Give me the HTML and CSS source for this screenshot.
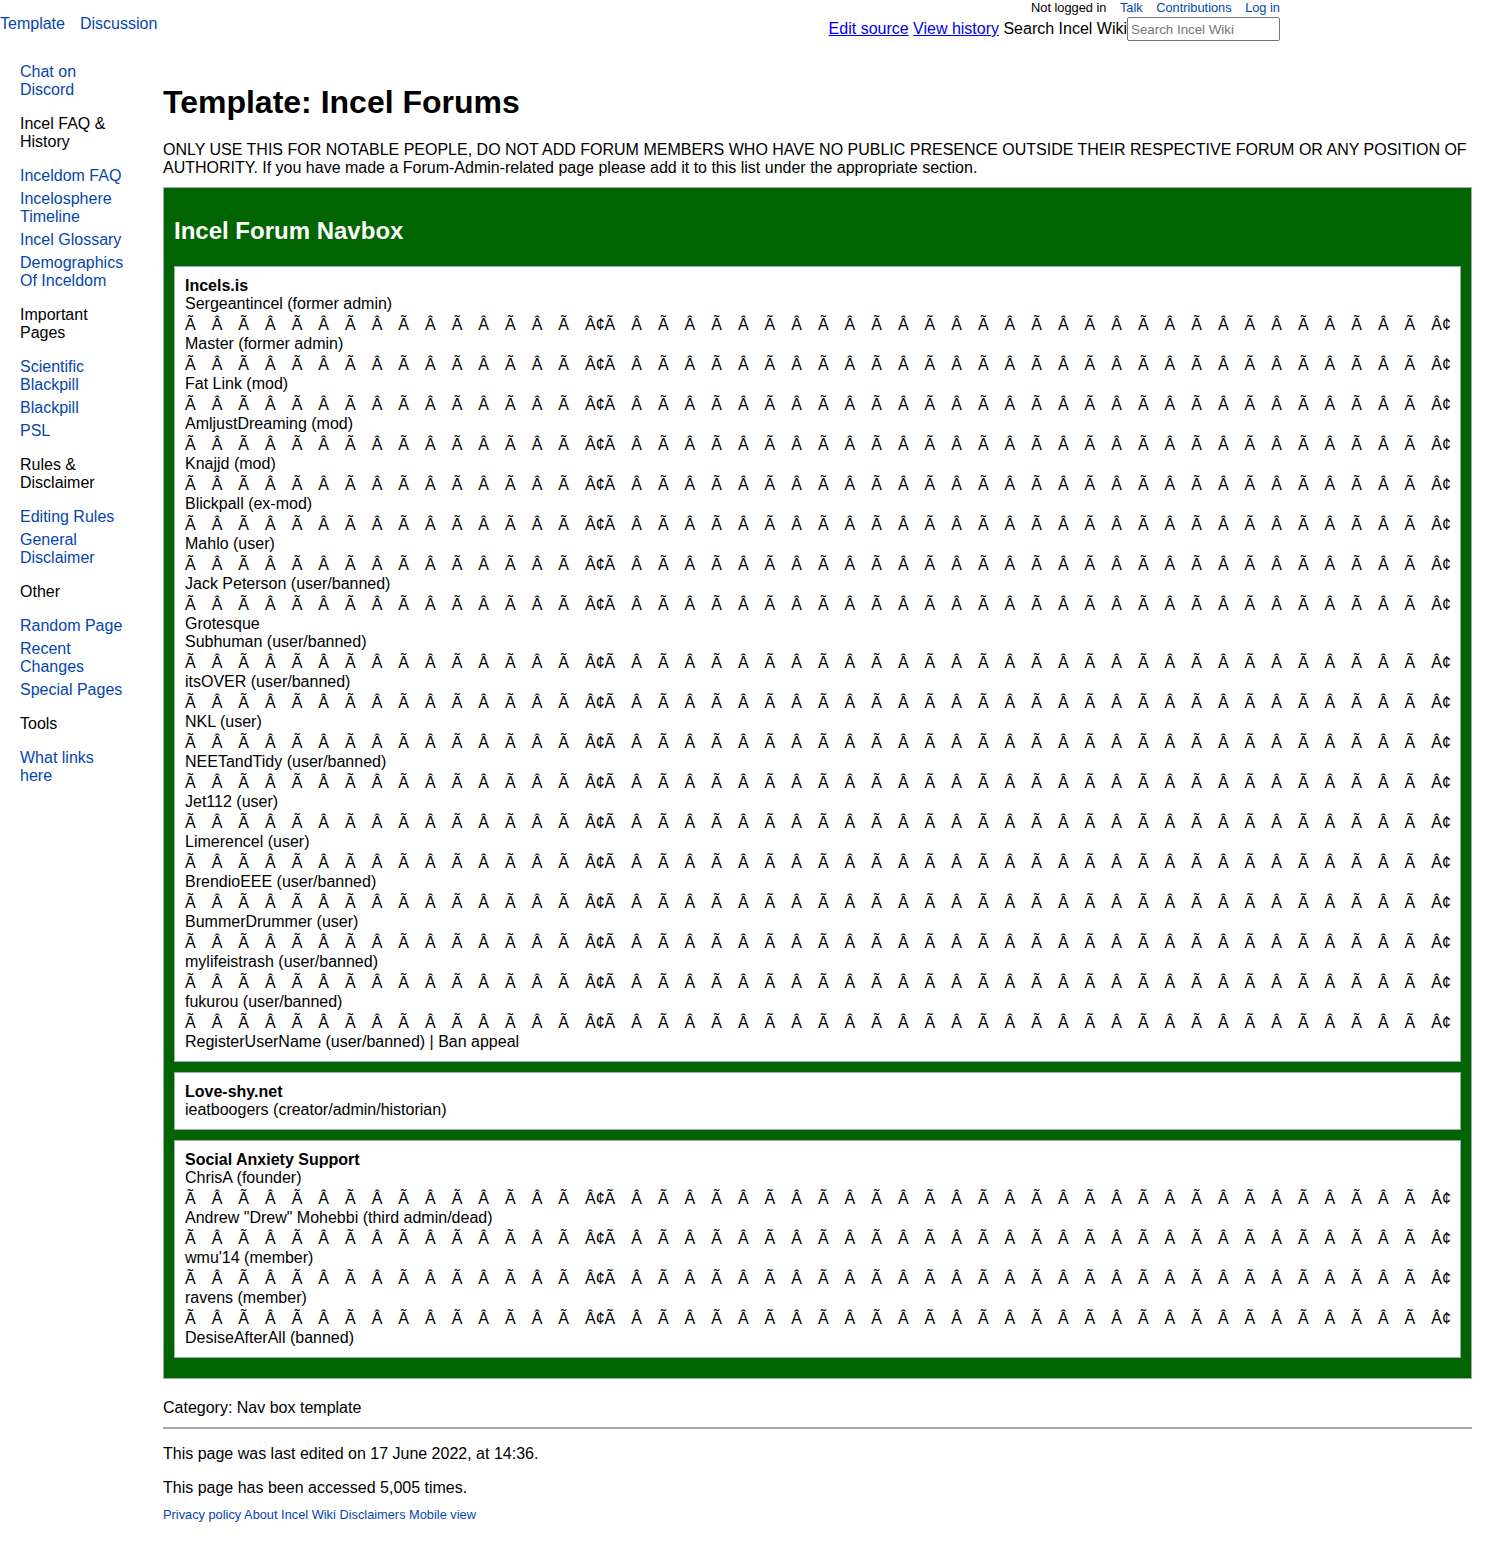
FILE: index.html
```html
<!DOCTYPE html>
<html lang="en">
<head>
<meta charset="utf-8">
<title>Template: Incel Forums - Incel Wiki</title>
<link rel="stylesheet" href="styles.css">
</head>
<body>
<header class="topbar">
  <div class="ns-tabs">
    <a href="#">Template</a>
    <a href="#">Discussion</a>
  </div>
  <div class="user-area">
    <div class="personal">
      <span class="not-logged">Not logged in</span>
      <a href="#">Talk</a>
      <a href="#">Contributions</a>
      <a href="#">Log in</a>
    </div>
    <div class="actions">
      <a href="#" class="action-link">Edit source</a>
      <a href="#" class="action-link">View history</a>
      <label class="search-label" for="search">Search Incel Wiki</label><input id="search" class="search-input" type="search" placeholder="Search Incel Wiki">
    </div>
  </div>
</header>

<div class="layout">
  <nav class="sidebar">
    <div class="side-section">
      <ul class="side-links">
        <li><a href="#">Chat on Discord</a></li>
      </ul>
    </div>
    <div class="side-section">
      <h3 class="side-heading">Incel FAQ &amp; History</h3>
      <ul class="side-links">
        <li><a href="#">Inceldom FAQ</a></li>
        <li><a href="#">Incelosphere Timeline</a></li>
        <li><a href="#">Incel Glossary</a></li>
        <li><a href="#">Demographics Of Inceldom</a></li>
      </ul>
    </div>
    <div class="side-section">
      <h3 class="side-heading">Important Pages</h3>
      <ul class="side-links">
        <li><a href="#">Scientific Blackpill</a></li>
        <li><a href="#">Blackpill</a></li>
        <li><a href="#">PSL</a></li>
      </ul>
    </div>
    <div class="side-section">
      <h3 class="side-heading">Rules &amp; Disclaimer</h3>
      <ul class="side-links">
        <li><a href="#">Editing Rules</a></li>
        <li><a href="#">General Disclaimer</a></li>
      </ul>
    </div>
    <div class="side-section">
      <h3 class="side-heading">Other</h3>
      <ul class="side-links">
        <li><a href="#">Random Page</a></li>
        <li><a href="#">Recent Changes</a></li>
        <li><a href="#">Special Pages</a></li>
      </ul>
    </div>
    <div class="side-section">
      <h3 class="side-heading">Tools</h3>
      <ul class="side-links">
        <li><a href="#">What links here</a></li>
      </ul>
    </div>
  </nav>

  <main class="content">
    <h1 class="page-title">Template: Incel Forums</h1>
    <p class="desc">ONLY USE THIS FOR NOTABLE PEOPLE, DO NOT ADD FORUM MEMBERS WHO HAVE NO PUBLIC PRESENCE OUTSIDE THEIR RESPECTIVE FORUM OR ANY POSITION OF AUTHORITY. If you have made a Forum-Admin-related page please add it to this list under the appropriate section.</p>

    <div class="navbox">
      <div class="navbox-head">Incel Forum Navbox</div>
      <div class="navbox-body">
        <div class="group">
          <div class="group-title">Incels.is</div>
          <div class="name">Sergeantincel (former admin)</div>
          <div class="sep">Ã Â Ã Â Ã Â Ã Â Ã Â Ã Â Ã Â Ã Â¢Ã Â Ã Â Ã Â Ã Â Ã Â Ã Â Ã Â Ã Â Ã Â Ã Â Ã Â Ã Â Ã Â Ã Â Ã Â Ã Â¢</div>
          <div class="name">Master (former admin)</div>
          <div class="sep">Ã Â Ã Â Ã Â Ã Â Ã Â Ã Â Ã Â Ã Â¢Ã Â Ã Â Ã Â Ã Â Ã Â Ã Â Ã Â Ã Â Ã Â Ã Â Ã Â Ã Â Ã Â Ã Â Ã Â Ã Â¢</div>
          <div class="name">Fat Link (mod)</div>
          <div class="sep">Ã Â Ã Â Ã Â Ã Â Ã Â Ã Â Ã Â Ã Â¢Ã Â Ã Â Ã Â Ã Â Ã Â Ã Â Ã Â Ã Â Ã Â Ã Â Ã Â Ã Â Ã Â Ã Â Ã Â Ã Â¢</div>
          <div class="name">AmljustDreaming (mod)</div>
          <div class="sep">Ã Â Ã Â Ã Â Ã Â Ã Â Ã Â Ã Â Ã Â¢Ã Â Ã Â Ã Â Ã Â Ã Â Ã Â Ã Â Ã Â Ã Â Ã Â Ã Â Ã Â Ã Â Ã Â Ã Â Ã Â¢</div>
          <div class="name">Knajjd (mod)</div>
          <div class="sep">Ã Â Ã Â Ã Â Ã Â Ã Â Ã Â Ã Â Ã Â¢Ã Â Ã Â Ã Â Ã Â Ã Â Ã Â Ã Â Ã Â Ã Â Ã Â Ã Â Ã Â Ã Â Ã Â Ã Â Ã Â¢</div>
          <div class="name">Blickpall (ex-mod)</div>
          <div class="sep">Ã Â Ã Â Ã Â Ã Â Ã Â Ã Â Ã Â Ã Â¢Ã Â Ã Â Ã Â Ã Â Ã Â Ã Â Ã Â Ã Â Ã Â Ã Â Ã Â Ã Â Ã Â Ã Â Ã Â Ã Â¢</div>
          <div class="name">Mahlo (user)</div>
          <div class="sep">Ã Â Ã Â Ã Â Ã Â Ã Â Ã Â Ã Â Ã Â¢Ã Â Ã Â Ã Â Ã Â Ã Â Ã Â Ã Â Ã Â Ã Â Ã Â Ã Â Ã Â Ã Â Ã Â Ã Â Ã Â¢</div>
          <div class="name">Jack Peterson (user/banned)</div>
          <div class="sep">Ã Â Ã Â Ã Â Ã Â Ã Â Ã Â Ã Â Ã Â¢Ã Â Ã Â Ã Â Ã Â Ã Â Ã Â Ã Â Ã Â Ã Â Ã Â Ã Â Ã Â Ã Â Ã Â Ã Â Ã Â¢</div>
          <div class="name">Grotesque</div>
          <div class="name">Subhuman (user/banned)</div>
          <div class="sep">Ã Â Ã Â Ã Â Ã Â Ã Â Ã Â Ã Â Ã Â¢Ã Â Ã Â Ã Â Ã Â Ã Â Ã Â Ã Â Ã Â Ã Â Ã Â Ã Â Ã Â Ã Â Ã Â Ã Â Ã Â¢</div>
          <div class="name">itsOVER (user/banned)</div>
          <div class="sep">Ã Â Ã Â Ã Â Ã Â Ã Â Ã Â Ã Â Ã Â¢Ã Â Ã Â Ã Â Ã Â Ã Â Ã Â Ã Â Ã Â Ã Â Ã Â Ã Â Ã Â Ã Â Ã Â Ã Â Ã Â¢</div>
          <div class="name">NKL (user)</div>
          <div class="sep">Ã Â Ã Â Ã Â Ã Â Ã Â Ã Â Ã Â Ã Â¢Ã Â Ã Â Ã Â Ã Â Ã Â Ã Â Ã Â Ã Â Ã Â Ã Â Ã Â Ã Â Ã Â Ã Â Ã Â Ã Â¢</div>
          <div class="name">NEETandTidy (user/banned)</div>
          <div class="sep">Ã Â Ã Â Ã Â Ã Â Ã Â Ã Â Ã Â Ã Â¢Ã Â Ã Â Ã Â Ã Â Ã Â Ã Â Ã Â Ã Â Ã Â Ã Â Ã Â Ã Â Ã Â Ã Â Ã Â Ã Â¢</div>
          <div class="name">Jet112 (user)</div>
          <div class="sep">Ã Â Ã Â Ã Â Ã Â Ã Â Ã Â Ã Â Ã Â¢Ã Â Ã Â Ã Â Ã Â Ã Â Ã Â Ã Â Ã Â Ã Â Ã Â Ã Â Ã Â Ã Â Ã Â Ã Â Ã Â¢</div>
          <div class="name">Limerencel (user)</div>
          <div class="sep">Ã Â Ã Â Ã Â Ã Â Ã Â Ã Â Ã Â Ã Â¢Ã Â Ã Â Ã Â Ã Â Ã Â Ã Â Ã Â Ã Â Ã Â Ã Â Ã Â Ã Â Ã Â Ã Â Ã Â Ã Â¢</div>
          <div class="name">BrendioEEE (user/banned)</div>
          <div class="sep">Ã Â Ã Â Ã Â Ã Â Ã Â Ã Â Ã Â Ã Â¢Ã Â Ã Â Ã Â Ã Â Ã Â Ã Â Ã Â Ã Â Ã Â Ã Â Ã Â Ã Â Ã Â Ã Â Ã Â Ã Â¢</div>
          <div class="name">BummerDrummer (user)</div>
          <div class="sep">Ã Â Ã Â Ã Â Ã Â Ã Â Ã Â Ã Â Ã Â¢Ã Â Ã Â Ã Â Ã Â Ã Â Ã Â Ã Â Ã Â Ã Â Ã Â Ã Â Ã Â Ã Â Ã Â Ã Â Ã Â¢</div>
          <div class="name">mylifeistrash (user/banned)</div>
          <div class="sep">Ã Â Ã Â Ã Â Ã Â Ã Â Ã Â Ã Â Ã Â¢Ã Â Ã Â Ã Â Ã Â Ã Â Ã Â Ã Â Ã Â Ã Â Ã Â Ã Â Ã Â Ã Â Ã Â Ã Â Ã Â¢</div>
          <div class="name">fukurou (user/banned)</div>
          <div class="sep">Ã Â Ã Â Ã Â Ã Â Ã Â Ã Â Ã Â Ã Â¢Ã Â Ã Â Ã Â Ã Â Ã Â Ã Â Ã Â Ã Â Ã Â Ã Â Ã Â Ã Â Ã Â Ã Â Ã Â Ã Â¢</div>
          <div class="name">RegisterUserName (user/banned) | Ban appeal</div>
        </div>

        <div class="group">
          <div class="group-title">Love-shy.net</div>
          <div class="name">ieatboogers (creator/admin/historian)</div>
        </div>

        <div class="group">
          <div class="group-title">Social Anxiety Support</div>
          <div class="name">ChrisA (founder)</div>
          <div class="sep">Ã Â Ã Â Ã Â Ã Â Ã Â Ã Â Ã Â Ã Â¢Ã Â Ã Â Ã Â Ã Â Ã Â Ã Â Ã Â Ã Â Ã Â Ã Â Ã Â Ã Â Ã Â Ã Â Ã Â Ã Â¢</div>
          <div class="name">Andrew "Drew" Mohebbi (third admin/dead)</div>
          <div class="sep">Ã Â Ã Â Ã Â Ã Â Ã Â Ã Â Ã Â Ã Â¢Ã Â Ã Â Ã Â Ã Â Ã Â Ã Â Ã Â Ã Â Ã Â Ã Â Ã Â Ã Â Ã Â Ã Â Ã Â Ã Â¢</div>
          <div class="name">wmu'14 (member)</div>
          <div class="sep">Ã Â Ã Â Ã Â Ã Â Ã Â Ã Â Ã Â Ã Â¢Ã Â Ã Â Ã Â Ã Â Ã Â Ã Â Ã Â Ã Â Ã Â Ã Â Ã Â Ã Â Ã Â Ã Â Ã Â Ã Â¢</div>
          <div class="name">ravens (member)</div>
          <div class="sep">Ã Â Ã Â Ã Â Ã Â Ã Â Ã Â Ã Â Ã Â¢Ã Â Ã Â Ã Â Ã Â Ã Â Ã Â Ã Â Ã Â Ã Â Ã Â Ã Â Ã Â Ã Â Ã Â Ã Â Ã Â¢</div>
          <div class="name">DesiseAfterAll (banned)</div>
        </div>
      </div>
    </div>

    <div class="catlinks">Category: Nav box template</div>
    <hr class="rule">
    <p class="info">This page was last edited on 17 June 2022, at 14:36.</p>
    <p class="info info-last">This page has been accessed 5,005 times.</p>
    <div class="footer-links">
      <a href="#">Privacy policy</a> <a href="#">About Incel Wiki</a> <a href="#">Disclaimers</a> <a href="#">Mobile view</a>
    </div>
  </main>
</div>
</body>
</html>
```

FILE: styles.css
```css
* {
  box-sizing: border-box;
}

body {
  margin: 0;
  font-family: "Liberation Sans", Arial, sans-serif;
  font-size: 16px;
  line-height: 18px;
  color: #000;
  background: #fff;
}

a {
  color: #0645ad;
  text-decoration: none;
}

/* ---------- top bar ---------- */
.topbar {
  display: flex;
  justify-content: space-between;
  align-items: flex-start;
  padding-right: 213px;
}

.ns-tabs {
  display: flex;
  gap: 15px;
  padding-top: 15px;
}

.user-area {
  display: flex;
  flex-direction: column;
  align-items: flex-end;
}

.personal {
  display: flex;
  gap: 13.5px;
  font-size: 12.8px;
  line-height: 15px;
}

.actions {
  display: flex;
  align-items: center;
  margin-top: 2px;
}

.action-link {
  color: #0000ee;
  text-decoration: underline;
  margin-right: 4.4px;
}

.search-input {
  width: 153px;
  height: 24px;
  border: 1px solid #767676;
  border-radius: 2px;
  padding: 1px 3px;
  font-family: "Liberation Sans", Arial, sans-serif;
  font-size: 13.33px;
  background: #fff;
}

.search-input::placeholder {
  color: #757575;
}

/* ---------- layout ---------- */
.layout {
  display: flex;
  padding: 22px 21px 0 20px;
}

.sidebar {
  width: 105px;
  flex-shrink: 0;
}

.side-section {
  margin-bottom: 16px;
}

.side-heading {
  margin: 0 0 16px;
  font-size: 16px;
  font-weight: normal;
  line-height: 18px;
}

.side-links {
  list-style: none;
  margin: 0;
  padding: 0;
}

.side-links li {
  margin-bottom: 5px;
}

.side-links li:last-child {
  margin-bottom: 0;
}

.content {
  flex: 1;
  min-width: 0;
  margin-left: 38px;
}

.page-title {
  margin: 21px 0 20px;
  font-size: 32px;
  line-height: 37px;
  font-weight: bold;
}

.desc {
  margin: 0 0 10px;
}

/* ---------- navbox ---------- */
.navbox {
  border: 1px solid #a2a9b1;
  background: #006400;
}

.navbox-head {
  padding: 29px 10px 21px;
  color: #fff;
  font-size: 24px;
  line-height: 28px;
  font-weight: bold;
}

.navbox-body {
  padding: 0 10px 10px;
}

.group {
  background: #fff;
  border: 1px solid #a2a9b1;
  padding: 10px 10px 10px;
  margin-bottom: 10px;
}

.group-title {
  font-weight: bold;
}

.sep {
  white-space: nowrap;
  line-height: 21px;
  padding-top: 1px;
  word-spacing: 11.55px;
}

/* ---------- footer ---------- */
.catlinks {
  margin-top: 20px;
}

.rule {
  border: 0;
  border-top: 2px solid #a8a8a8;
  margin: 10px 0 16px;
}

.info {
  margin: 0 0 16px;
}

.info-last {
  margin-bottom: 10px;
}

.footer-links {
  font-size: 12.8px;
  line-height: 15px;
}
```
